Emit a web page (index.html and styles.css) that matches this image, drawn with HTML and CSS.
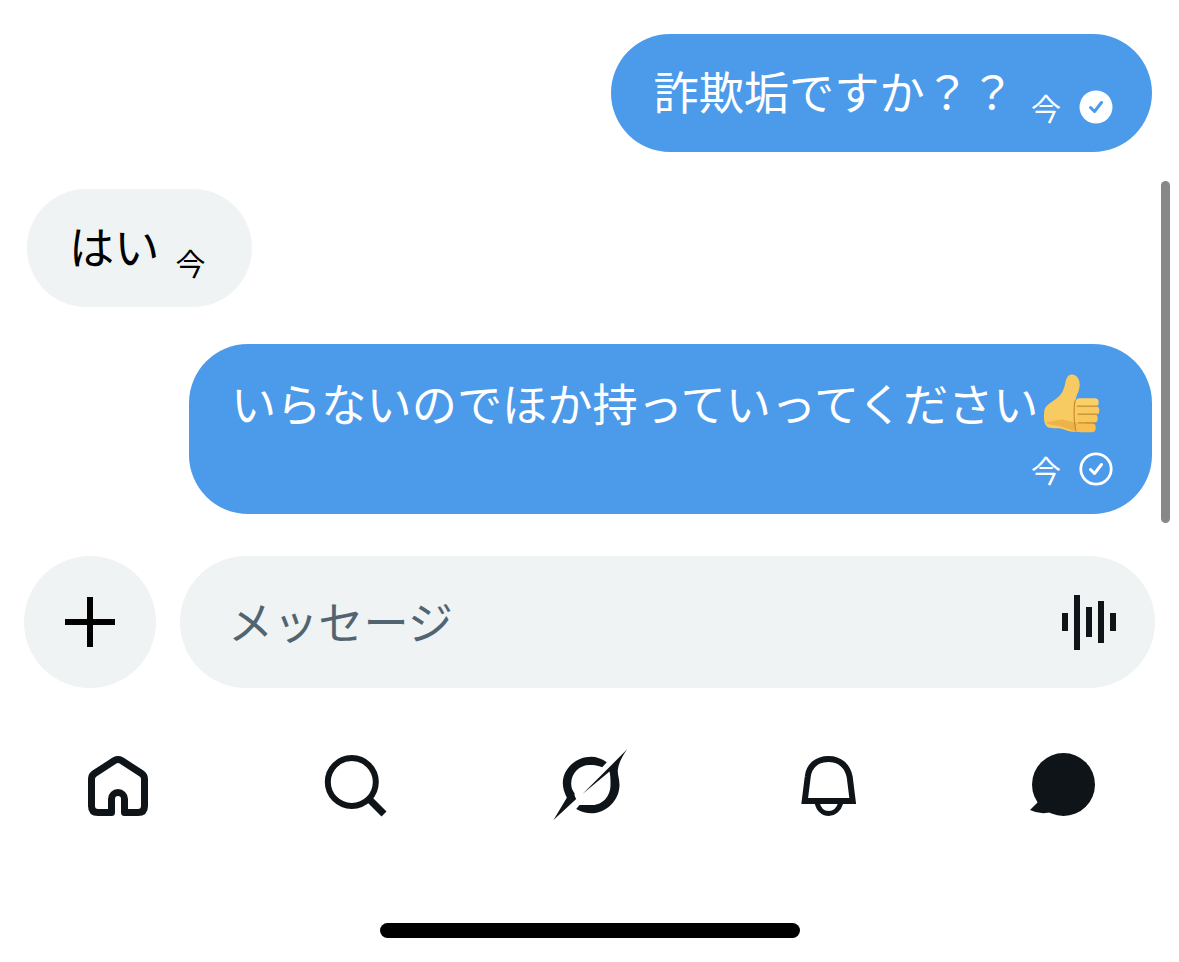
FILE: index.html
```html
<!DOCTYPE html>
<html lang="ja">
<head>
    <meta charset="UTF-8">
    <meta name="viewport" content="width=device-width, initial-scale=1.0">
    <title>メッセージ</title>
    <link rel="stylesheet" href="styles.css">
</head>
<body>

<main class="chat">
    <div class="bubble bubble-mine bubble-short">
        <p class="msg-text">詐欺垢ですか？？</p>
        <div class="meta">
            <span class="meta-time">今</span>
            <svg class="meta-check" viewBox="0 0 34 34">
                <circle cx="17" cy="17" r="16.5" fill="#fff"/>
                <path d="M11.5 17.5l4 4 7-9" fill="none" stroke="#4c9aea" stroke-width="3" stroke-linecap="round" stroke-linejoin="round"/>
            </svg>
        </div>
    </div>

    <div class="bubble bubble-theirs bubble-short">
        <p class="msg-text">はい</p>
        <div class="meta">
            <span class="meta-time">今</span>
        </div>
    </div>

    <div class="bubble bubble-mine bubble-long">
        <div class="msg-line">
            <p class="msg-text">いらないのでほか持っていってください</p>
            <svg class="thumb" viewBox="190 35 180 185">
                <path d="M197 150C200 128 232 124 250 96C262 76 258 56 270 45C284 35 305 48 303 76C302 92 294 102 291 116L320 160L322 212L292 214C272 215 258 206 242 203C224 202 206 208 199 190C195 178 195 165 197 150Z" fill="#f8ca62"/>
                <path d="M201 186C214 196 232 192 248 199L292 213L296 188L250 176Z" fill="#eeb24a"/>
                <rect x="291" y="113" width="69" height="26" rx="12" fill="#fad06a"/>
                <rect x="293" y="137" width="69" height="26" rx="12" fill="#f8ca62"/>
                <rect x="295" y="161" width="62" height="26" rx="12" fill="#f8c75c"/>
                <rect x="293" y="188" width="58" height="27" rx="12" fill="#f6bf50"/>
                <path d="M296 137h60M298 161h56M298 187h50" stroke="#c98a2e" stroke-width="3.500" stroke-linecap="round"/>
                <path d="M290 118C284 140 286 190 292 212" fill="none" stroke="#c98a2e" stroke-width="3.500"/>
            </svg>
        </div>
        <div class="meta meta-row">
            <span class="meta-time">今</span>
            <svg class="meta-check" viewBox="0 0 34 34">
                <circle cx="17" cy="17" r="15.2" fill="none" stroke="#fff" stroke-width="2.8"/>
                <path d="M11.5 17.5l4 4 7-9" fill="none" stroke="#fff" stroke-width="3" stroke-linecap="round" stroke-linejoin="round"/>
            </svg>
        </div>
    </div>
</main>

<div class="scrollbar"></div>

<div class="composer">
    <div class="add-btn">
        <svg class="add-icon" viewBox="0 0 50 50">
            <path d="M25 0V50M0 25H50" stroke="#000" stroke-width="6"/>
        </svg>
    </div>
    <div class="input-box">
        <span class="placeholder">メッセージ</span>
        <svg class="voice-icon" viewBox="0 0 54 56" fill="#0f1419">
            <rect x="0" y="18" width="6" height="18"/>
            <rect x="12" y="0" width="6" height="55"/>
            <rect x="24" y="12" width="6" height="30"/>
            <rect x="36" y="6" width="6" height="42"/>
            <rect x="48" y="18" width="6" height="18"/>
        </svg>
    </div>
</div>

<nav class="tabbar">
    <svg class="tab-icon" viewBox="-6 -6 72 72">
        <path d="M3.5 50V23Q3.5 19.500 6.500 17.500L26.500 4.500Q30 2.500 33.500 4.500L53.500 17.500Q56.500 19.500 56.500 23V50Q56.500 56.500 50 56.500H36.500V43A6.500 6.500 0 0 0 23.500 43V56.500H10Q3.500 56.500 3.500 50Z" fill="none" stroke="#0f1419" stroke-width="7" stroke-linejoin="round"/>
    </svg>
    <svg class="tab-icon" viewBox="0 0 72 72">
        <circle cx="33.800" cy="32" r="24" fill="none" stroke="#0f1419" stroke-width="6"/>
        <path d="M51 49L66 64" stroke="#0f1419" stroke-width="7"/>
    </svg>
    <svg class="tab-icon" viewBox="23.500 20 72 72" fill="#0f1419">
        <path d="M24 90L46.700 69C45 66 45 64.500 45 63.300C42.500 60 41.700 57 41.700 53.300C42 43 50 35 60 35C65 35 69 35.500 72.700 37.300L77.300 32.300C72 28.500 67 26.700 61.700 26.700C46 26.700 33.300 39 33.300 53.300C33.300 58 35 63 37.300 67.700Z"/>
        <path d="M97.700 19.300L53 64L80 41.500C81 45 81 50 81 55C81 66 73 75 63.300 75C58 75 54 75 50 75L46.700 79C52 82 57 83.300 61.700 83.300C77 83.300 90 70 90 55C90 49 88 45 88.300 40C89 33 93 26 97.700 19.300Z"/>
    </svg>
    <svg class="tab-icon" viewBox="9.300 20 72 72" fill="none" stroke="#0f1419">
        <path d="M25 71L28 47C29 36 37 29 49 29C60 29 68 36 70 47L73 71Z" stroke-width="6"/>
        <path d="M37.500 73C39 80 44 83.500 49 83.500C54 83.500 59 80 61 73" stroke-width="5"/>
    </svg>
    <svg class="tab-icon" viewBox="245 20 72 72" fill="#0f1419">
        <circle cx="283.500" cy="54.500" r="31.500"/>
        <path d="M254 62L258 72L250 80Q260 85 272 82Z"/>
    </svg>
</nav>

<div class="home-bar"></div>

</body>
</html>
```

FILE: styles.css
```css
body {
    font-family: "Noto Sans CJK JP", "Noto Sans", sans-serif;
    margin: 0;
    padding: 0;
    background-color: #fff;
    color: #000;
    height: 962px;
    overflow: hidden;
    position: relative;
}
p {
    margin: 0;
}
.chat {
    display: flex;
    flex-direction: column;
    gap: 37px;
    padding: 34px 27px 0;
}
.bubble {
    border-radius: 59px;
    box-sizing: border-box;
}
.bubble-short {
    display: flex;
    align-items: center;
    gap: 16px;
    height: 118px;
    padding: 0 39px 0 43px;
}
.bubble-mine {
    align-self: flex-end;
    background-color: #4c9aea;
    color: #fff;
}
.bubble-theirs {
    align-self: flex-start;
    width: 225px;
    padding-left: 42px;
    background-color: #eff3f4;
}
.bubble-long {
    width: 963px;
    padding: 30px 39px 28px 42px;
}
.msg-text {
    font-size: 45.2px;
    line-height: 62px;
    white-space: nowrap;
    margin-bottom: 4px;
}
.msg-line {
    display: flex;
    align-items: center;
    height: 62px;
}
.thumb {
    width: 60px;
    height: 62px;
    flex: none;
    margin: 0 0 4px 3px;
}
.meta {
    display: flex;
    align-items: center;
    gap: 18px;
    margin-top: 28px;
}
.meta-row {
    justify-content: flex-end;
    margin-top: 16px;
}
.meta-time {
    font-size: 30px;
    line-height: 34px;
}
.meta-check {
    width: 34px;
    height: 34px;
    flex: none;
}
.scrollbar {
    position: absolute;
    left: 1161px;
    top: 181px;
    width: 9px;
    height: 342px;
    border-radius: 5px;
    background-color: #888;
}
.composer {
    display: flex;
    align-items: center;
    gap: 24px;
    padding: 42px 24px 0;
}
.add-btn {
    display: flex;
    align-items: center;
    justify-content: center;
    width: 132px;
    height: 132px;
    flex: none;
    border-radius: 50%;
    background-color: #eff3f4;
}
.add-icon {
    width: 50px;
    height: 50px;
}
.input-box {
    display: flex;
    align-items: center;
    justify-content: space-between;
    flex: 1;
    height: 132px;
    padding: 0 39px 0 48px;
    border-radius: 66px;
    background-color: #eff3f4;
}
.placeholder {
    font-size: 45.2px;
    color: #536471;
    margin-bottom: 4px;
}
.voice-icon {
    width: 54px;
    height: 56px;
    margin-top: 2px;
}
.tabbar {
    display: grid;
    grid-template-columns: repeat(5, 1fr);
    justify-items: center;
    padding-top: 62px;
}
.tab-icon {
    width: 72px;
    height: 72px;
    overflow: visible;
}
.home-bar {
    width: 420px;
    height: 15px;
    margin: 101px auto 0;
    border-radius: 8px;
    background-color: #000;
}
```
